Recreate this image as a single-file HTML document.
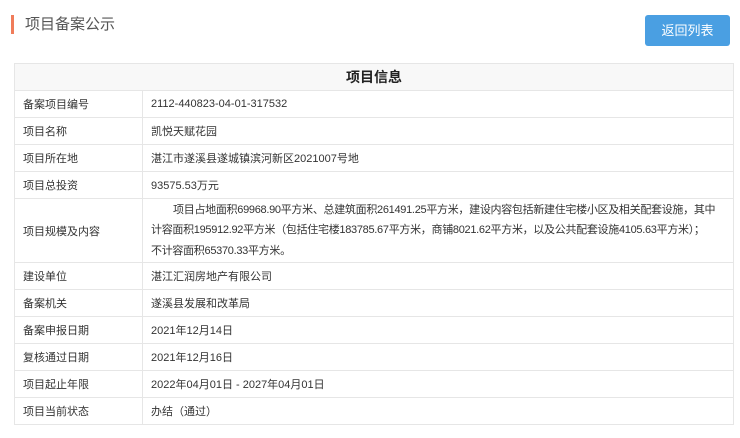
<!DOCTYPE html>
<html><head><meta charset="utf-8"><style>
body{margin:0;width:740px;height:438px;background:#fff;font-family:"Liberation Sans","Noto Sans CJK SC",sans-serif;position:relative;overflow:hidden}
.bar{position:absolute;left:11px;top:15px;width:3px;height:19px;background:#f07c5a}
.title{position:absolute;left:25px;top:14px;font-size:15px;color:#555;line-height:22px}
.btn{position:absolute;left:645px;top:15px;width:85px;height:31px;background:#4a9fe2;border-radius:3px;color:#fff;font-size:13px;line-height:31px;text-align:center}
table{position:absolute;left:14px;top:63px;width:720px;border-collapse:collapse;font-size:11px;color:#333}
td{border:1px solid #e6e6e6;padding:0 8px;height:26px}
th{border:1px solid #e6e6e6;height:26px;padding:0;background:#f8f8f8;font-size:14px;color:#222}
td.l{width:111px;padding-left:8px}
td.big{height:63px;line-height:20.5px;padding-top:0;letter-spacing:-0.3px;padding-right:4px}
</style></head><body>
<div class="bar"></div><div class="title">项目备案公示</div>
<div class="btn">返回列表</div>
<table>
<tr><th colspan="2">项目信息</th></tr>
<tr><td class="l">备案项目编号</td><td>2112-440823-04-01-317532</td></tr>
<tr><td class="l">项目名称</td><td>凯悦天赋花园</td></tr>
<tr><td class="l">项目所在地</td><td>湛江市遂溪县遂城镇滨河新区2021007号地</td></tr>
<tr><td class="l">项目总投资</td><td>93575.53万元</td></tr>
<tr><td class="l">项目规模及内容</td><td class="big">&nbsp;&nbsp;&nbsp;&nbsp;&nbsp;&nbsp;&nbsp;&nbsp;项目占地面积69968.90平方米、总建筑面积261491.25平方米，建设内容包括新建住宅楼小区及相关配套设施，其中<br>计容面积195912.92平方米（包括住宅楼183785.67平方米，商铺8021.62平方米，以及公共配套设施4105.63平方米）；<br>不计容面积65370.33平方米。</td></tr>
<tr><td class="l">建设单位</td><td>湛江汇润房地产有限公司</td></tr>
<tr><td class="l">备案机关</td><td>遂溪县发展和改革局</td></tr>
<tr><td class="l">备案申报日期</td><td>2021年12月14日</td></tr>
<tr><td class="l">复核通过日期</td><td>2021年12月16日</td></tr>
<tr><td class="l">项目起止年限</td><td>2022年04月01日 - 2027年04月01日</td></tr>
<tr><td class="l">项目当前状态</td><td>办结（通过）</td></tr>
</table>
</body></html>
